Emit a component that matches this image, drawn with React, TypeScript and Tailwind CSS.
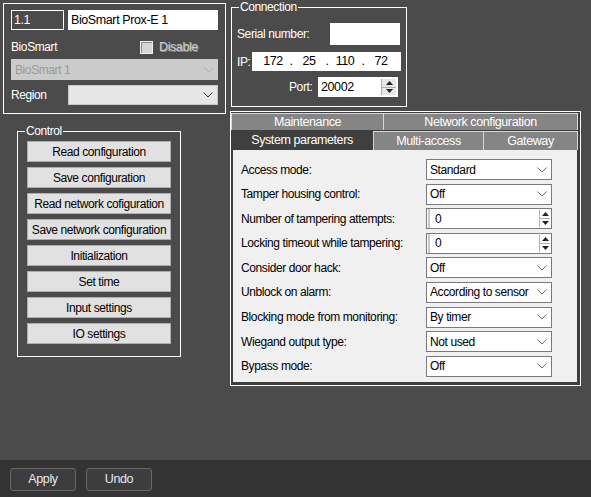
import React from "react";

const FONT = "font-['Liberation_Sans',Arial,sans-serif] tracking-[-0.4px] whitespace-nowrap";

function Chevron({ color = "#6a6a6a" }: { color?: string }) {
  return (
    <svg width="10" height="6" viewBox="0 0 10 6">
      <polyline points="0.5,0.5 5,5 9.5,0.5" fill="none" stroke={color} strokeWidth="1" />
    </svg>
  );
}

function SpinArrows({ w = 11 }: { w?: number }) {
  return (
    <div className="flex flex-col h-full border-l border-[#b0b0b0]" style={{ width: w }}>
      <div className="flex-1 flex items-center justify-center border-b border-[#b0b0b0]">
        <svg width="7" height="4" viewBox="0 0 7 4">
          <polygon points="0,4 3.5,0 7,4" fill="#222" />
        </svg>
      </div>
      <div className="flex-1 flex items-center justify-center">
        <svg width="7" height="4" viewBox="0 0 7 4">
          <polygon points="0,0 3.5,4 7,0" fill="#222" />
        </svg>
      </div>
    </div>
  );
}

function PaneSelect({ value }: { value: string }) {
  return (
    <div className="w-[126px] h-[21px] bg-white border border-[#7a7a7a] flex items-center justify-between pl-[3px] pr-[4px] text-[12px] text-black">
      <span>{value}</span>
      <Chevron />
    </div>
  );
}

function PaneSpin({ value }: { value: string }) {
  return (
    <div className="w-[126px] h-[21px] bg-white border border-[#7a7a7a] flex items-stretch text-[12px] text-black">
      <div className="flex-1 flex items-center pl-[5px] border-l-2 border-[#c8c8c8] ml-[1px]">{value}</div>
      <div className="py-[1px] pr-[1px]">
        <SpinArrows />
      </div>
    </div>
  );
}

const rows: { label: string; value: string; spin?: boolean }[] = [
  { label: "Access mode:", value: "Standard" },
  { label: "Tamper housing control:", value: "Off" },
  { label: "Number of tampering attempts:", value: "0", spin: true },
  { label: "Locking timeout while tampering:", value: "0", spin: true },
  { label: "Consider door hack:", value: "Off" },
  { label: "Unblock on alarm:", value: "According to sensor" },
  { label: "Blocking mode from monitoring:", value: "By timer" },
  { label: "Wiegand output type:", value: "Not used" },
  { label: "Bypass mode:", value: "Off" },
];

const controlButtons = [
  "Read configuration",
  "Save configuration",
  "Read network cofiguration",
  "Save network configuration",
  "Initialization",
  "Set time",
  "Input settings",
  "IO settings",
];

export default function App() {
  return (
    <div className={`${FONT} text-[11.5px] w-[591px] h-[497px] bg-[#4b4b4b] flex flex-col overflow-hidden`}>
      <div className="h-[460px] flex">
        {/* Left column */}
        <div className="w-[230px] flex flex-col">
          <div className="ml-[3px] mt-[3px] w-[223px] border border-white flex flex-col pl-[7px] pb-[8px]">
            <div className="mt-[6px] h-[20px] flex gap-[4px]">
              <div className="w-[53px] h-[20px] border border-white flex items-center pl-[2px] text-[12.5px] text-white">1.1</div>
              <div className="w-[150px] h-[20px] bg-white flex items-center pl-[3px] text-[12.5px] text-black">BioSmart Prox-E 1</div>
            </div>
            <div className="mt-[10px] h-[14px] flex items-center">
              <div className="w-[129px] text-[12px] text-white">BioSmart</div>
              <div className="w-[13px] h-[13px] bg-[#d6d6d6] border border-[#f0f0f0] shadow-[inset_1px_1px_0_#8a8a8a]" />
              <div className="ml-[6px] text-[12.5px] text-[#cfcfcf] [text-shadow:1px_1px_0_#8a8a8a]">Disable</div>
            </div>
            <div className="mt-[5px] w-[207px] h-[21px] bg-[#cbcbcb] flex items-center justify-between pl-[4px] pr-[4px] text-[12px] text-[#9a9a9a]">
              <span>BioSmart 1</span>
              <Chevron color="#b2b2b2" />
            </div>
            <div className="mt-[5px] h-[20px] flex items-center">
              <div className="w-[57px] text-[12px] text-white">Region</div>
              <div className="w-[150px] h-[20px] bg-[#e6e6e6] border border-[#c8c8c8] flex items-center justify-end pr-[4px]">
                <Chevron color="#333" />
              </div>
            </div>
          </div>

          <fieldset className="ml-[17px] mt-[10px] w-[164px] border border-white px-[9px] pb-[12px]">
            <legend className="-ml-[2px] px-[1px] text-[12px] leading-[14px] text-white">Control</legend>
            <div className="mt-[3px] flex flex-col gap-[5px]">
              {controlButtons.map((b) => (
                <div
                  key={b}
                  className="w-[144px] h-[21px] bg-[#e1e1e1] border border-[#adadad] flex items-center justify-center text-[12px] text-black"
                >
                  {b}
                </div>
              ))}
            </div>
          </fieldset>
        </div>

        {/* Right column */}
        <div className="flex flex-col">
          <fieldset className="ml-[1px] w-[176px] h-[107px] border border-white">
            <legend className="ml-[7px] px-[1px] text-[12px] leading-[14px] text-white">Connection</legend>
            <div className="flex flex-col text-[12px] text-white">
              <div className="mt-[9px] h-[22px] flex items-center justify-between pl-[5px] pr-[6px]">
                <span>Serial number:</span>
                <div className="w-[70px] h-[22px] bg-white" />
              </div>
              <div className="mt-[7px] h-[19px] flex items-center pl-[5px]">
                <span className="w-[15px]">IP:</span>
                <div className="w-[149px] h-[19px] bg-white flex items-center pl-[6px] text-black text-[12.5px]">
                  <span className="w-[30px] text-center">172</span>
                  <span className="w-[6px] text-center">.</span>
                  <span className="w-[30px] text-center">25</span>
                  <span className="w-[6px] text-center">.</span>
                  <span className="w-[30px] text-center">110</span>
                  <span className="w-[6px] text-center">.</span>
                  <span className="w-[30px] text-center">72</span>
                </div>
              </div>
              <div className="mt-[6px] h-[20px] flex items-center pl-[57px]">
                <span className="w-[29px]">Port:</span>
                <div className="w-[80px] h-[20px] bg-white flex items-stretch text-black text-[12.5px]">
                  <div className="flex-1 flex items-center pl-[3px]">20002</div>
                  <div className="py-[2px] pr-[2px]">
                    <div className="h-full bg-[#e6e6e6]">
                      <SpinArrows w={15} />
                    </div>
                  </div>
                </div>
              </div>
            </div>
          </fieldset>

          <div className="mt-[4px] w-[351px] border border-white bg-[#3f3f3f] flex flex-col pt-[1px] text-[12.5px]">
            <div className="flex h-[17px] mr-[2px]">
              <div className="w-[153px] bg-[#858585] border-t border-l border-r border-[#d8d8d8] flex items-center justify-center text-white">
                Maintenance
              </div>
              <div className="flex-1 bg-[#858585] border-t border-r border-[#d8d8d8] flex items-center justify-center text-white">
                Network configuration
              </div>
            </div>
            <div className="flex h-[20px] mr-[2px]">
              <div className="w-[142px] bg-[#3f3f3f] flex items-center justify-center text-white">System parameters</div>
              <div className="mt-[1px] w-[111px] bg-[#858585] border-t border-l border-r border-[#d8d8d8] flex items-center justify-center text-white">
                Multi-access
              </div>
              <div className="mt-[1px] flex-1 bg-[#858585] border-t border-r border-[#d8d8d8] flex items-center justify-center text-white">
                Gateway
              </div>
            </div>
            <div className="ml-[2px] mr-[3px] mb-[3px] h-[232px] bg-[#f0f0f0] pt-[9px] pl-[8px] flex flex-col gap-[3.6px] text-[12px]">
              {rows.map((r) => (
                <div key={r.label} className="h-[21px] flex items-center">
                  <div className="w-[185px] text-black">{r.label}</div>
                  {r.spin ? <PaneSpin value={r.value} /> : <PaneSelect value={r.value} />}
                </div>
              ))}
            </div>
          </div>
        </div>
      </div>

      {/* Bottom bar */}
      <div className="flex-1 bg-[#333333] flex items-center gap-[10px] pl-[10px] pt-[1px]">
        <div className="w-[66px] h-[23px] bg-[#3d3d40] border border-[#686868] rounded-[3px] flex items-center justify-center text-[12.5px] text-[#e8e8e8]">
          Apply
        </div>
        <div className="w-[66px] h-[23px] bg-[#3d3d40] border border-[#686868] rounded-[3px] flex items-center justify-center text-[12.5px] text-[#e8e8e8]">
          Undo
        </div>
      </div>
    </div>
  );
}
